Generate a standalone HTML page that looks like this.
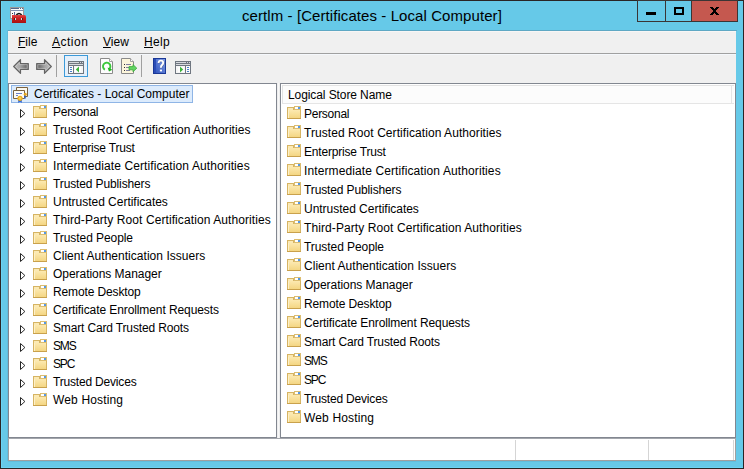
<!DOCTYPE html>
<html><head><meta charset="utf-8"><style>
*{margin:0;padding:0;box-sizing:border-box}
html,body{width:744px;height:469px;overflow:hidden;background:#66c9e8;font-family:"Liberation Sans",sans-serif;font-size:12px;color:#000}
.a{position:absolute}
.tt{line-height:18px;white-space:nowrap;letter-spacing:0.1px}
.lt{line-height:19px;white-space:nowrap;letter-spacing:0.1px}
svg{display:block}
u{text-decoration:underline}
</style></head><body>
<!-- outer dark border -->
<div class="a" style="left:0;top:0;width:744px;height:1px;background:#2a2525"></div>
<div class="a" style="left:0;top:0;width:1px;height:469px;background:#2a2525"></div>
<div class="a" style="left:0;top:468px;width:744px;height:1px;background:#2a2525"></div>
<div class="a" style="left:743px;top:0;width:1px;height:469px;background:#2a2525"></div>
<div class="a" style="left:1px;top:1px;width:1px;height:467px;background:#6cd3f3"></div><div class="a" style="left:1px;top:467px;width:742px;height:1px;background:#6cd3f3"></div><div class="a" style="left:8px;top:461px;width:728px;height:1px;background:#60bddd"></div>
<!-- app icon -->
<div class="a" style="left:10px;top:7px"><svg width="16" height="16" viewBox="0 0 16 16" shape-rendering="crispEdges"><defs><linearGradient id="tb" x1="0" y1="0" x2="0" y2="1"><stop offset="0" stop-color="#e24444"/><stop offset="0.35" stop-color="#cc2424"/><stop offset="1" stop-color="#a81212"/></linearGradient></defs><path d="M0 0H14V12H0Z" fill="#9a9a9a"/><path d="M1 1H13V11H1Z" fill="#fafafa"/><path d="M1 1H9V2H1Z M10 1H11V2H10Z M12 1H13V2H12Z" fill="#55658a"/><path d="M1 3H13V4H1Z" fill="#8090b0"/><path d="M4 5H5V9H4Z" fill="#5a6a9a"/><path d="M2 6H3V7H2Z" fill="#333"/><path d="M4.8 9 Q9 2.4 13.2 9 L11.5 9 Q9 5.6 6.5 9Z" fill="#111" shape-rendering="geometricPrecision"/><path d="M2 8H14.5Q16 8 16 9.5V16H2Z" fill="url(#tb)" shape-rendering="geometricPrecision"/><path d="M5 11H6V13H5Z M11 11H12V13H11Z" fill="#c8dcdc"/><path d="M4 11H5V13H4Z M12 11H13V13H12Z" fill="#6a1010"/></svg></div>
<div class="a" style="left:242px;top:6px;font-size:15px;line-height:20px;white-space:nowrap;letter-spacing:0.08px">certlm - [Certificates - Local Computer]</div>
<!-- caption buttons -->
<div class="a" style="left:637px;top:0;width:101px;height:22px;background:#3a3535"></div>
<div class="a" style="left:638px;top:1px;width:27px;height:20px;background:#66c9e8"></div>
<div class="a" style="left:666px;top:1px;width:25px;height:20px;background:#66c9e8"></div>
<div class="a" style="left:692px;top:1px;width:45px;height:20px;background:#c5584f"></div>
<div class="a" style="left:646px;top:12px;width:10px;height:3px;background:#000"></div>
<div class="a" style="left:674px;top:7px;width:10px;height:8px;border:2px solid #000"></div>
<svg class="a" style="left:710px;top:7px" width="9" height="8" viewBox="0 0 9 8" shape-rendering="crispEdges"><path d="M0 0H3V1H0ZM6 0H9V1H6ZM1 1H4V2H1ZM5 1H8V2H5ZM2 2H7V3H2ZM3 3H6V4H3ZM3 4H6V5H3ZM2 5H7V6H2ZM1 6H4V7H1ZM5 6H8V7H5ZM0 7H3V8H0ZM6 7H9V8H6Z" fill="#000"/></svg>

<!-- client -->
<div class="a" style="left:7px;top:30px;width:730px;height:1px;background:#5ea8c4"></div>
<div class="a" style="left:7px;top:30px;width:1px;height:431px;background:#62bcdc"></div>
<div class="a" style="left:8px;top:31px;width:728px;height:430px;background:#f0f0f0"></div>
<div class="a" style="left:8px;top:31px;width:728px;height:1px;background:#f8f6f5"></div>
<!-- menu -->
<div class="a" style="left:18px;top:35px;line-height:14px;white-space:nowrap"><u>F</u>ile</div>
<div class="a" style="left:52px;top:35px;line-height:14px;white-space:nowrap;letter-spacing:0.5px"><u>A</u>ction</div>
<div class="a" style="left:103px;top:35px;line-height:14px;white-space:nowrap"><u>V</u>iew</div>
<div class="a" style="left:144px;top:35px;line-height:14px;white-space:nowrap;letter-spacing:0.35px"><u>H</u>elp</div>
<div class="a" style="left:8px;top:53px;width:728px;height:1px;background:#a0a0a0"></div>
<div class="a" style="left:8px;top:54px;width:728px;height:1px;background:#f5f8fc"></div>
<!-- toolbar -->
<div class="a" style="left:13px;top:59px"><svg width="16" height="15" viewBox="0 0 16 15"><defs><linearGradient id="ag" x1="0" y1="0" x2="1" y2="0"><stop offset="0" stop-color="#cacaca"/><stop offset="0.45" stop-color="#a4a4a4"/><stop offset="0.85" stop-color="#6e6e6e"/><stop offset="1" stop-color="#8a8a8a"/></linearGradient></defs><path d="M0.7 7.5 L7.5 0.7 V4.5 H15.3 V10.5 H7.5 V14.3 Z" fill="url(#ag)" stroke="#636363" stroke-width="1.2" stroke-linejoin="round"/><path d="M2.4 7.5 L6.4 3.5 V5.6 H14.2 V9.4 H6.4 V11.5 Z" fill="none" stroke="#d8d8d8" stroke-opacity="0.55" stroke-width="0.8"/></svg></div>
<div class="a" style="left:36px;top:59px"><svg width="16" height="15" viewBox="0 0 16 15"><defs><linearGradient id="ag2" x1="0" y1="0" x2="1" y2="0"><stop offset="0" stop-color="#cacaca"/><stop offset="0.45" stop-color="#a4a4a4"/><stop offset="0.85" stop-color="#6e6e6e"/><stop offset="1" stop-color="#8a8a8a"/></linearGradient></defs><path transform="translate(16,0) scale(-1,1)" d="M0.7 7.5 L7.5 0.7 V4.5 H15.3 V10.5 H7.5 V14.3 Z" fill="url(#ag2)" stroke="#636363" stroke-width="1.2" stroke-linejoin="round"/><path transform="translate(16,0) scale(-1,1)" d="M2.4 7.5 L6.4 3.5 V5.6 H14.2 V9.4 H6.4 V11.5 Z" fill="none" stroke="#d8d8d8" stroke-opacity="0.55" stroke-width="0.8"/></svg></div>
<div class="a" style="left:56px;top:55px;width:1px;height:22px;background:#a0a0a0"></div>
<div class="a" style="left:64px;top:55px;width:24px;height:22px;background:#e5f0fb;border:1px solid #3c9ad9"></div>
<div class="a" style="left:68px;top:61px"><svg width="16" height="13" viewBox="0 0 16 13" shape-rendering="crispEdges"><path d="M0 0H16V13H0Z" fill="#6f7680"/><path d="M1 1H11V2H1Z M12 1H13V2H12Z M14 1H15V2H14Z M1 3H15V4H1Z" fill="#d6d9de"/><path d="M1 5H5V12H1Z" fill="#fbfbfb"/><path d="M6 5H15V12H6Z" fill="#f6f6f6"/><path d="M7 6H13V11H7Z" fill="#fdfdfd"/><path d="M2 6H4V7H2Z M2 8H4V9H2Z M2 10H4V11H2Z" fill="#4a7fc8"/><path d="M11 5.6 L11 11.4 L7.8 8.5Z" fill="#3cb53c" shape-rendering="geometricPrecision"/></svg></div>
<div class="a" style="left:100px;top:58px"><svg width="13" height="16" viewBox="0 0 13 16"><path d="M0.5 0.5 H9.5 L12.5 3.5 V15.5 H0.5 Z" fill="#fdfdfd" stroke="#8a8a8a"/><path d="M9.5 0.5 V3.5 H12.5" fill="#fff" stroke="#a0a0a0"/><path d="M4.9 11.6 A3.7 3.7 0 1 1 9.3 11.0" fill="none" stroke="#3cc83c" stroke-width="1.9"/><path d="M7.6 9.6 L12.4 11.8 L9.0 13.6Z" fill="#1fb01f"/></svg></div>
<div class="a" style="left:121px;top:58px"><svg width="17" height="16" viewBox="0 0 17 16"><path d="M0.5 0.5 H9.5 L12.5 3.5 V15.5 H0.5 Z" fill="#fdf6dc" stroke="#8a8a8a"/><path d="M9.5 0.5 V3.5 H12.5" fill="#fff" stroke="#a0a0a0"/><path d="M3 6H4V7H3Z M3 9H4V10H3Z M3 12H4V13H3Z" fill="#333"/><path d="M5 6H10V7H5Z M5 9H9V10H5Z M5 12H9V13H5Z" fill="#8080a0"/><path d="M8 8.6 H12 V6.6 L15.8 10.2 L12 13.8 V11.8 H8Z" fill="#62d462" stroke="#3aa83a" stroke-width="0.8"/></svg></div>
<div class="a" style="left:141px;top:55px;width:1px;height:22px;background:#a0a0a0"></div>
<div class="a" style="left:153px;top:58px"><svg width="13" height="16" viewBox="0 0 13 16"><defs><linearGradient id="hg" x1="0" y1="1" x2="1" y2="0"><stop offset="0" stop-color="#3458c0"/><stop offset="1" stop-color="#7f9ce6"/></linearGradient></defs><path d="M0 0H13V16H0Z" fill="#1a3896"/><path d="M3 1H12V15H3Z" fill="url(#hg)"/><path d="M1 1H3V15H1Z" fill="#2b4cb6"/><path d="M5.6 5.0 Q5.6 2.6 7.9 2.6 Q10.2 2.6 10.2 4.8 Q10.2 6.2 8.9 7.1 Q7.9 7.8 7.9 9.8" stroke="#5a6a9a" stroke-width="1.9" fill="none" transform="translate(0.5,0.4)"/><path d="M5.6 5.0 Q5.6 2.6 7.9 2.6 Q10.2 2.6 10.2 4.8 Q10.2 6.2 8.9 7.1 Q7.9 7.8 7.9 9.8" stroke="#fff" stroke-width="1.9" fill="none"/><path d="M6.9 11.6H9V13.4H6.9Z" fill="#fff"/></svg></div>
<div class="a" style="left:175px;top:61px"><svg width="16" height="13" viewBox="0 0 16 13" shape-rendering="crispEdges"><path d="M0 0H16V13H0Z" fill="#6f7680"/><path d="M1 1H11V2H1Z M12 1H13V2H12Z M14 1H15V2H14Z M1 3H15V4H1Z" fill="#d6d9de"/><path d="M11 5H15V12H11Z" fill="#fbfbfb"/><path d="M1 5H10V12H1Z" fill="#f6f6f6"/><path d="M3 6H9V11H3Z" fill="#fdfdfd"/><path d="M12 6H14V7H12Z M12 8H14V9H12Z M12 10H14V11H12Z" fill="#4a7fc8"/><path d="M5 5.6 L5 11.4 L8.2 8.5Z" fill="#3cb53c" shape-rendering="geometricPrecision"/></svg></div>

<!-- tree pane -->
<div class="a" style="left:8px;top:83px;width:269px;height:355px;background:#fff;border:1px solid #828790"></div>
<div class="a" style="left:11px;top:85px;width:182px;height:18px;background:#dcebfc;border:1px solid #8fb5e6"></div>
<div class="a" style="left:13px;top:87px"><svg width="15" height="16" viewBox="0 0 15 16"><path d="M3.5 0.5H14.5V9.5H3.5Z" fill="#fbf8ef" stroke="#7a6240"/><path d="M0.5 3.5H11.5V11.5H0.5Z" fill="#fdfbf4" stroke="#7a6240"/><path d="M3 6H9V7H3Z M3 8H4.5V9H3Z" fill="#6a7fc8" shape-rendering="crispEdges"/><path d="M11.2 7.5 L12.5 7.5 L13 12 L12 11 L11.5 12Z" fill="#2a60d0"/><circle cx="12.3" cy="7.3" r="1.5" fill="#e8a820"/><path d="M5 12.5 L5.5 16 L7 14.5 L8.5 16 L9 12.5Z" fill="#1f5ad8"/><circle cx="7" cy="11.3" r="2.6" fill="#e9a91a"/><circle cx="7" cy="11.3" r="1.3" fill="#f6d060"/></svg></div>
<div class="a tt" style="left:34px;top:85px;letter-spacing:0px">Certificates - Local Computer</div>
<div class="a tri" style="left:20px;top:109px"><svg width="6" height="9" viewBox="0 0 6 9"><path d="M0.5 0.5 L4.9 4.5 L0.5 8.5 Z" fill="#fff" stroke="#262626" stroke-width="1"/></svg></div><div class="a" style="left:33px;top:105px"><svg width="14" height="13" viewBox="0 0 14 13" shape-rendering="crispEdges"><defs><linearGradient id="fg" x1="0" y1="0" x2="0" y2="1"><stop offset="0" stop-color="#fce9b0"/><stop offset="1" stop-color="#f4d683"/></linearGradient></defs><path d="M0 1H7V4H14V13H0Z" fill="#d6b463"/><path d="M7 0H14V4H7Z" fill="#dcbd70"/><path d="M0 12H14V13H0Z" fill="#c9a14c"/><path d="M8 1H11V3H8Z" fill="#ffffff"/><path d="M11 1H13V3H11Z" fill="#5598e4"/><path d="M1 2H6V4H1Z" fill="#fbe9b4"/><path d="M1 4H13V12H1Z" fill="url(#fg)"/><path d="M1 4H2V12H1Z" fill="#fdf0c8"/></svg></div><div class="a tt" style="left:53px;top:103px;letter-spacing:-0.271px">Personal</div><div class="a tri" style="left:20px;top:127px"><svg width="6" height="9" viewBox="0 0 6 9"><path d="M0.5 0.5 L4.9 4.5 L0.5 8.5 Z" fill="#fff" stroke="#262626" stroke-width="1"/></svg></div><div class="a" style="left:33px;top:123px"><svg width="14" height="13" viewBox="0 0 14 13" shape-rendering="crispEdges"><defs><linearGradient id="fg" x1="0" y1="0" x2="0" y2="1"><stop offset="0" stop-color="#fce9b0"/><stop offset="1" stop-color="#f4d683"/></linearGradient></defs><path d="M0 1H7V4H14V13H0Z" fill="#d6b463"/><path d="M7 0H14V4H7Z" fill="#dcbd70"/><path d="M0 12H14V13H0Z" fill="#c9a14c"/><path d="M8 1H11V3H8Z" fill="#ffffff"/><path d="M11 1H13V3H11Z" fill="#5598e4"/><path d="M1 2H6V4H1Z" fill="#fbe9b4"/><path d="M1 4H13V12H1Z" fill="url(#fg)"/><path d="M1 4H2V12H1Z" fill="#fdf0c8"/></svg></div><div class="a tt" style="left:53px;top:121px;letter-spacing:0.068px">Trusted Root Certification Authorities</div><div class="a tri" style="left:20px;top:145px"><svg width="6" height="9" viewBox="0 0 6 9"><path d="M0.5 0.5 L4.9 4.5 L0.5 8.5 Z" fill="#fff" stroke="#262626" stroke-width="1"/></svg></div><div class="a" style="left:33px;top:141px"><svg width="14" height="13" viewBox="0 0 14 13" shape-rendering="crispEdges"><defs><linearGradient id="fg" x1="0" y1="0" x2="0" y2="1"><stop offset="0" stop-color="#fce9b0"/><stop offset="1" stop-color="#f4d683"/></linearGradient></defs><path d="M0 1H7V4H14V13H0Z" fill="#d6b463"/><path d="M7 0H14V4H7Z" fill="#dcbd70"/><path d="M0 12H14V13H0Z" fill="#c9a14c"/><path d="M8 1H11V3H8Z" fill="#ffffff"/><path d="M11 1H13V3H11Z" fill="#5598e4"/><path d="M1 2H6V4H1Z" fill="#fbe9b4"/><path d="M1 4H13V12H1Z" fill="url(#fg)"/><path d="M1 4H2V12H1Z" fill="#fdf0c8"/></svg></div><div class="a tt" style="left:53px;top:139px;letter-spacing:-0.193px">Enterprise Trust</div><div class="a tri" style="left:20px;top:163px"><svg width="6" height="9" viewBox="0 0 6 9"><path d="M0.5 0.5 L4.9 4.5 L0.5 8.5 Z" fill="#fff" stroke="#262626" stroke-width="1"/></svg></div><div class="a" style="left:33px;top:159px"><svg width="14" height="13" viewBox="0 0 14 13" shape-rendering="crispEdges"><defs><linearGradient id="fg" x1="0" y1="0" x2="0" y2="1"><stop offset="0" stop-color="#fce9b0"/><stop offset="1" stop-color="#f4d683"/></linearGradient></defs><path d="M0 1H7V4H14V13H0Z" fill="#d6b463"/><path d="M7 0H14V4H7Z" fill="#dcbd70"/><path d="M0 12H14V13H0Z" fill="#c9a14c"/><path d="M8 1H11V3H8Z" fill="#ffffff"/><path d="M11 1H13V3H11Z" fill="#5598e4"/><path d="M1 2H6V4H1Z" fill="#fbe9b4"/><path d="M1 4H13V12H1Z" fill="url(#fg)"/><path d="M1 4H2V12H1Z" fill="#fdf0c8"/></svg></div><div class="a tt" style="left:53px;top:157px;letter-spacing:0.105px">Intermediate Certification Authorities</div><div class="a tri" style="left:20px;top:181px"><svg width="6" height="9" viewBox="0 0 6 9"><path d="M0.5 0.5 L4.9 4.5 L0.5 8.5 Z" fill="#fff" stroke="#262626" stroke-width="1"/></svg></div><div class="a" style="left:33px;top:177px"><svg width="14" height="13" viewBox="0 0 14 13" shape-rendering="crispEdges"><defs><linearGradient id="fg" x1="0" y1="0" x2="0" y2="1"><stop offset="0" stop-color="#fce9b0"/><stop offset="1" stop-color="#f4d683"/></linearGradient></defs><path d="M0 1H7V4H14V13H0Z" fill="#d6b463"/><path d="M7 0H14V4H7Z" fill="#dcbd70"/><path d="M0 12H14V13H0Z" fill="#c9a14c"/><path d="M8 1H11V3H8Z" fill="#ffffff"/><path d="M11 1H13V3H11Z" fill="#5598e4"/><path d="M1 2H6V4H1Z" fill="#fbe9b4"/><path d="M1 4H13V12H1Z" fill="url(#fg)"/><path d="M1 4H2V12H1Z" fill="#fdf0c8"/></svg></div><div class="a tt" style="left:53px;top:175px;letter-spacing:-0.124px">Trusted Publishers</div><div class="a tri" style="left:20px;top:199px"><svg width="6" height="9" viewBox="0 0 6 9"><path d="M0.5 0.5 L4.9 4.5 L0.5 8.5 Z" fill="#fff" stroke="#262626" stroke-width="1"/></svg></div><div class="a" style="left:33px;top:195px"><svg width="14" height="13" viewBox="0 0 14 13" shape-rendering="crispEdges"><defs><linearGradient id="fg" x1="0" y1="0" x2="0" y2="1"><stop offset="0" stop-color="#fce9b0"/><stop offset="1" stop-color="#f4d683"/></linearGradient></defs><path d="M0 1H7V4H14V13H0Z" fill="#d6b463"/><path d="M7 0H14V4H7Z" fill="#dcbd70"/><path d="M0 12H14V13H0Z" fill="#c9a14c"/><path d="M8 1H11V3H8Z" fill="#ffffff"/><path d="M11 1H13V3H11Z" fill="#5598e4"/><path d="M1 2H6V4H1Z" fill="#fbe9b4"/><path d="M1 4H13V12H1Z" fill="url(#fg)"/><path d="M1 4H2V12H1Z" fill="#fdf0c8"/></svg></div><div class="a tt" style="left:53px;top:193px;letter-spacing:-0.024px">Untrusted Certificates</div><div class="a tri" style="left:20px;top:217px"><svg width="6" height="9" viewBox="0 0 6 9"><path d="M0.5 0.5 L4.9 4.5 L0.5 8.5 Z" fill="#fff" stroke="#262626" stroke-width="1"/></svg></div><div class="a" style="left:33px;top:213px"><svg width="14" height="13" viewBox="0 0 14 13" shape-rendering="crispEdges"><defs><linearGradient id="fg" x1="0" y1="0" x2="0" y2="1"><stop offset="0" stop-color="#fce9b0"/><stop offset="1" stop-color="#f4d683"/></linearGradient></defs><path d="M0 1H7V4H14V13H0Z" fill="#d6b463"/><path d="M7 0H14V4H7Z" fill="#dcbd70"/><path d="M0 12H14V13H0Z" fill="#c9a14c"/><path d="M8 1H11V3H8Z" fill="#ffffff"/><path d="M11 1H13V3H11Z" fill="#5598e4"/><path d="M1 2H6V4H1Z" fill="#fbe9b4"/><path d="M1 4H13V12H1Z" fill="url(#fg)"/><path d="M1 4H2V12H1Z" fill="#fdf0c8"/></svg></div><div class="a tt" style="left:53px;top:211px;letter-spacing:0.090px">Third-Party Root Certification Authorities</div><div class="a tri" style="left:20px;top:235px"><svg width="6" height="9" viewBox="0 0 6 9"><path d="M0.5 0.5 L4.9 4.5 L0.5 8.5 Z" fill="#fff" stroke="#262626" stroke-width="1"/></svg></div><div class="a" style="left:33px;top:231px"><svg width="14" height="13" viewBox="0 0 14 13" shape-rendering="crispEdges"><defs><linearGradient id="fg" x1="0" y1="0" x2="0" y2="1"><stop offset="0" stop-color="#fce9b0"/><stop offset="1" stop-color="#f4d683"/></linearGradient></defs><path d="M0 1H7V4H14V13H0Z" fill="#d6b463"/><path d="M7 0H14V4H7Z" fill="#dcbd70"/><path d="M0 12H14V13H0Z" fill="#c9a14c"/><path d="M8 1H11V3H8Z" fill="#ffffff"/><path d="M11 1H13V3H11Z" fill="#5598e4"/><path d="M1 2H6V4H1Z" fill="#fbe9b4"/><path d="M1 4H13V12H1Z" fill="url(#fg)"/><path d="M1 4H2V12H1Z" fill="#fdf0c8"/></svg></div><div class="a tt" style="left:53px;top:229px;letter-spacing:-0.069px">Trusted People</div><div class="a tri" style="left:20px;top:253px"><svg width="6" height="9" viewBox="0 0 6 9"><path d="M0.5 0.5 L4.9 4.5 L0.5 8.5 Z" fill="#fff" stroke="#262626" stroke-width="1"/></svg></div><div class="a" style="left:33px;top:249px"><svg width="14" height="13" viewBox="0 0 14 13" shape-rendering="crispEdges"><defs><linearGradient id="fg" x1="0" y1="0" x2="0" y2="1"><stop offset="0" stop-color="#fce9b0"/><stop offset="1" stop-color="#f4d683"/></linearGradient></defs><path d="M0 1H7V4H14V13H0Z" fill="#d6b463"/><path d="M7 0H14V4H7Z" fill="#dcbd70"/><path d="M0 12H14V13H0Z" fill="#c9a14c"/><path d="M8 1H11V3H8Z" fill="#ffffff"/><path d="M11 1H13V3H11Z" fill="#5598e4"/><path d="M1 2H6V4H1Z" fill="#fbe9b4"/><path d="M1 4H13V12H1Z" fill="url(#fg)"/><path d="M1 4H2V12H1Z" fill="#fdf0c8"/></svg></div><div class="a tt" style="left:53px;top:247px;letter-spacing:0.029px">Client Authentication Issuers</div><div class="a tri" style="left:20px;top:271px"><svg width="6" height="9" viewBox="0 0 6 9"><path d="M0.5 0.5 L4.9 4.5 L0.5 8.5 Z" fill="#fff" stroke="#262626" stroke-width="1"/></svg></div><div class="a" style="left:33px;top:267px"><svg width="14" height="13" viewBox="0 0 14 13" shape-rendering="crispEdges"><defs><linearGradient id="fg" x1="0" y1="0" x2="0" y2="1"><stop offset="0" stop-color="#fce9b0"/><stop offset="1" stop-color="#f4d683"/></linearGradient></defs><path d="M0 1H7V4H14V13H0Z" fill="#d6b463"/><path d="M7 0H14V4H7Z" fill="#dcbd70"/><path d="M0 12H14V13H0Z" fill="#c9a14c"/><path d="M8 1H11V3H8Z" fill="#ffffff"/><path d="M11 1H13V3H11Z" fill="#5598e4"/><path d="M1 2H6V4H1Z" fill="#fbe9b4"/><path d="M1 4H13V12H1Z" fill="url(#fg)"/><path d="M1 4H2V12H1Z" fill="#fdf0c8"/></svg></div><div class="a tt" style="left:53px;top:265px;letter-spacing:-0.041px">Operations Manager</div><div class="a tri" style="left:20px;top:289px"><svg width="6" height="9" viewBox="0 0 6 9"><path d="M0.5 0.5 L4.9 4.5 L0.5 8.5 Z" fill="#fff" stroke="#262626" stroke-width="1"/></svg></div><div class="a" style="left:33px;top:285px"><svg width="14" height="13" viewBox="0 0 14 13" shape-rendering="crispEdges"><defs><linearGradient id="fg" x1="0" y1="0" x2="0" y2="1"><stop offset="0" stop-color="#fce9b0"/><stop offset="1" stop-color="#f4d683"/></linearGradient></defs><path d="M0 1H7V4H14V13H0Z" fill="#d6b463"/><path d="M7 0H14V4H7Z" fill="#dcbd70"/><path d="M0 12H14V13H0Z" fill="#c9a14c"/><path d="M8 1H11V3H8Z" fill="#ffffff"/><path d="M11 1H13V3H11Z" fill="#5598e4"/><path d="M1 2H6V4H1Z" fill="#fbe9b4"/><path d="M1 4H13V12H1Z" fill="url(#fg)"/><path d="M1 4H2V12H1Z" fill="#fdf0c8"/></svg></div><div class="a tt" style="left:53px;top:283px;letter-spacing:-0.131px">Remote Desktop</div><div class="a tri" style="left:20px;top:307px"><svg width="6" height="9" viewBox="0 0 6 9"><path d="M0.5 0.5 L4.9 4.5 L0.5 8.5 Z" fill="#fff" stroke="#262626" stroke-width="1"/></svg></div><div class="a" style="left:33px;top:303px"><svg width="14" height="13" viewBox="0 0 14 13" shape-rendering="crispEdges"><defs><linearGradient id="fg" x1="0" y1="0" x2="0" y2="1"><stop offset="0" stop-color="#fce9b0"/><stop offset="1" stop-color="#f4d683"/></linearGradient></defs><path d="M0 1H7V4H14V13H0Z" fill="#d6b463"/><path d="M7 0H14V4H7Z" fill="#dcbd70"/><path d="M0 12H14V13H0Z" fill="#c9a14c"/><path d="M8 1H11V3H8Z" fill="#ffffff"/><path d="M11 1H13V3H11Z" fill="#5598e4"/><path d="M1 2H6V4H1Z" fill="#fbe9b4"/><path d="M1 4H13V12H1Z" fill="url(#fg)"/><path d="M1 4H2V12H1Z" fill="#fdf0c8"/></svg></div><div class="a tt" style="left:53px;top:301px;letter-spacing:-0.093px">Certificate Enrollment Requests</div><div class="a tri" style="left:20px;top:325px"><svg width="6" height="9" viewBox="0 0 6 9"><path d="M0.5 0.5 L4.9 4.5 L0.5 8.5 Z" fill="#fff" stroke="#262626" stroke-width="1"/></svg></div><div class="a" style="left:33px;top:321px"><svg width="14" height="13" viewBox="0 0 14 13" shape-rendering="crispEdges"><defs><linearGradient id="fg" x1="0" y1="0" x2="0" y2="1"><stop offset="0" stop-color="#fce9b0"/><stop offset="1" stop-color="#f4d683"/></linearGradient></defs><path d="M0 1H7V4H14V13H0Z" fill="#d6b463"/><path d="M7 0H14V4H7Z" fill="#dcbd70"/><path d="M0 12H14V13H0Z" fill="#c9a14c"/><path d="M8 1H11V3H8Z" fill="#ffffff"/><path d="M11 1H13V3H11Z" fill="#5598e4"/><path d="M1 2H6V4H1Z" fill="#fbe9b4"/><path d="M1 4H13V12H1Z" fill="url(#fg)"/><path d="M1 4H2V12H1Z" fill="#fdf0c8"/></svg></div><div class="a tt" style="left:53px;top:319px;letter-spacing:-0.152px">Smart Card Trusted Roots</div><div class="a tri" style="left:20px;top:343px"><svg width="6" height="9" viewBox="0 0 6 9"><path d="M0.5 0.5 L4.9 4.5 L0.5 8.5 Z" fill="#fff" stroke="#262626" stroke-width="1"/></svg></div><div class="a" style="left:33px;top:339px"><svg width="14" height="13" viewBox="0 0 14 13" shape-rendering="crispEdges"><defs><linearGradient id="fg" x1="0" y1="0" x2="0" y2="1"><stop offset="0" stop-color="#fce9b0"/><stop offset="1" stop-color="#f4d683"/></linearGradient></defs><path d="M0 1H7V4H14V13H0Z" fill="#d6b463"/><path d="M7 0H14V4H7Z" fill="#dcbd70"/><path d="M0 12H14V13H0Z" fill="#c9a14c"/><path d="M8 1H11V3H8Z" fill="#ffffff"/><path d="M11 1H13V3H11Z" fill="#5598e4"/><path d="M1 2H6V4H1Z" fill="#fbe9b4"/><path d="M1 4H13V12H1Z" fill="url(#fg)"/><path d="M1 4H2V12H1Z" fill="#fdf0c8"/></svg></div><div class="a tt" style="left:53px;top:337px;letter-spacing:-1.150px">SMS</div><div class="a tri" style="left:20px;top:361px"><svg width="6" height="9" viewBox="0 0 6 9"><path d="M0.5 0.5 L4.9 4.5 L0.5 8.5 Z" fill="#fff" stroke="#262626" stroke-width="1"/></svg></div><div class="a" style="left:33px;top:357px"><svg width="14" height="13" viewBox="0 0 14 13" shape-rendering="crispEdges"><defs><linearGradient id="fg" x1="0" y1="0" x2="0" y2="1"><stop offset="0" stop-color="#fce9b0"/><stop offset="1" stop-color="#f4d683"/></linearGradient></defs><path d="M0 1H7V4H14V13H0Z" fill="#d6b463"/><path d="M7 0H14V4H7Z" fill="#dcbd70"/><path d="M0 12H14V13H0Z" fill="#c9a14c"/><path d="M8 1H11V3H8Z" fill="#ffffff"/><path d="M11 1H13V3H11Z" fill="#5598e4"/><path d="M1 2H6V4H1Z" fill="#fbe9b4"/><path d="M1 4H13V12H1Z" fill="url(#fg)"/><path d="M1 4H2V12H1Z" fill="#fdf0c8"/></svg></div><div class="a tt" style="left:53px;top:355px;letter-spacing:-1.150px">SPC</div><div class="a tri" style="left:20px;top:379px"><svg width="6" height="9" viewBox="0 0 6 9"><path d="M0.5 0.5 L4.9 4.5 L0.5 8.5 Z" fill="#fff" stroke="#262626" stroke-width="1"/></svg></div><div class="a" style="left:33px;top:375px"><svg width="14" height="13" viewBox="0 0 14 13" shape-rendering="crispEdges"><defs><linearGradient id="fg" x1="0" y1="0" x2="0" y2="1"><stop offset="0" stop-color="#fce9b0"/><stop offset="1" stop-color="#f4d683"/></linearGradient></defs><path d="M0 1H7V4H14V13H0Z" fill="#d6b463"/><path d="M7 0H14V4H7Z" fill="#dcbd70"/><path d="M0 12H14V13H0Z" fill="#c9a14c"/><path d="M8 1H11V3H8Z" fill="#ffffff"/><path d="M11 1H13V3H11Z" fill="#5598e4"/><path d="M1 2H6V4H1Z" fill="#fbe9b4"/><path d="M1 4H13V12H1Z" fill="url(#fg)"/><path d="M1 4H2V12H1Z" fill="#fdf0c8"/></svg></div><div class="a tt" style="left:53px;top:373px;letter-spacing:-0.186px">Trusted Devices</div><div class="a tri" style="left:20px;top:397px"><svg width="6" height="9" viewBox="0 0 6 9"><path d="M0.5 0.5 L4.9 4.5 L0.5 8.5 Z" fill="#fff" stroke="#262626" stroke-width="1"/></svg></div><div class="a" style="left:33px;top:393px"><svg width="14" height="13" viewBox="0 0 14 13" shape-rendering="crispEdges"><defs><linearGradient id="fg" x1="0" y1="0" x2="0" y2="1"><stop offset="0" stop-color="#fce9b0"/><stop offset="1" stop-color="#f4d683"/></linearGradient></defs><path d="M0 1H7V4H14V13H0Z" fill="#d6b463"/><path d="M7 0H14V4H7Z" fill="#dcbd70"/><path d="M0 12H14V13H0Z" fill="#c9a14c"/><path d="M8 1H11V3H8Z" fill="#ffffff"/><path d="M11 1H13V3H11Z" fill="#5598e4"/><path d="M1 2H6V4H1Z" fill="#fbe9b4"/><path d="M1 4H13V12H1Z" fill="url(#fg)"/><path d="M1 4H2V12H1Z" fill="#fdf0c8"/></svg></div><div class="a tt" style="left:53px;top:391px;letter-spacing:0.150px">Web Hosting</div>
<!-- splitter -->
<div class="a" style="left:277px;top:83px;width:3px;height:355px;background:#eeeeee"></div><div class="a" style="left:278px;top:83px;width:1px;height:355px;background:#f8f8f8"></div>
<!-- list pane -->
<div class="a" style="left:280px;top:83px;width:456px;height:355px;background:#fff;border:1px solid #828790"></div>
<div class="a" style="left:282px;top:85px;width:452px;height:19px;background:#fcfcfc;border-left:1px solid #e3e3e3;border-top:1px solid #e3e3e3;border-bottom:1px solid #e5e5e5"></div>
<div class="a" style="left:731px;top:85px;width:1px;height:18px;background:#e5e5e5"></div>
<div class="a tt" style="left:288px;top:86px;letter-spacing:-0.09px">Logical Store Name</div>
<div class="a" style="left:287px;top:106px"><svg width="14" height="13" viewBox="0 0 14 13" shape-rendering="crispEdges"><defs><linearGradient id="fg2" x1="0" y1="0" x2="0" y2="1"><stop offset="0" stop-color="#fce9b0"/><stop offset="1" stop-color="#f4d683"/></linearGradient></defs><path d="M0 1H7V4H14V13H0Z" fill="#d6b463"/><path d="M7 0H14V4H7Z" fill="#dcbd70"/><path d="M0 12H14V13H0Z" fill="#c9a14c"/><path d="M8 1H11V3H8Z" fill="#ffffff"/><path d="M11 1H13V3H11Z" fill="#5598e4"/><path d="M1 2H6V4H1Z" fill="#fbe9b4"/><path d="M1 4H13V12H1Z" fill="url(#fg2)"/><path d="M1 4H2V12H1Z" fill="#fdf0c8"/></svg></div><div class="a lt" style="left:304px;top:105px;letter-spacing:-0.271px">Personal</div><div class="a" style="left:287px;top:125px"><svg width="14" height="13" viewBox="0 0 14 13" shape-rendering="crispEdges"><defs><linearGradient id="fg2" x1="0" y1="0" x2="0" y2="1"><stop offset="0" stop-color="#fce9b0"/><stop offset="1" stop-color="#f4d683"/></linearGradient></defs><path d="M0 1H7V4H14V13H0Z" fill="#d6b463"/><path d="M7 0H14V4H7Z" fill="#dcbd70"/><path d="M0 12H14V13H0Z" fill="#c9a14c"/><path d="M8 1H11V3H8Z" fill="#ffffff"/><path d="M11 1H13V3H11Z" fill="#5598e4"/><path d="M1 2H6V4H1Z" fill="#fbe9b4"/><path d="M1 4H13V12H1Z" fill="url(#fg2)"/><path d="M1 4H2V12H1Z" fill="#fdf0c8"/></svg></div><div class="a lt" style="left:304px;top:124px;letter-spacing:0.068px">Trusted Root Certification Authorities</div><div class="a" style="left:287px;top:144px"><svg width="14" height="13" viewBox="0 0 14 13" shape-rendering="crispEdges"><defs><linearGradient id="fg2" x1="0" y1="0" x2="0" y2="1"><stop offset="0" stop-color="#fce9b0"/><stop offset="1" stop-color="#f4d683"/></linearGradient></defs><path d="M0 1H7V4H14V13H0Z" fill="#d6b463"/><path d="M7 0H14V4H7Z" fill="#dcbd70"/><path d="M0 12H14V13H0Z" fill="#c9a14c"/><path d="M8 1H11V3H8Z" fill="#ffffff"/><path d="M11 1H13V3H11Z" fill="#5598e4"/><path d="M1 2H6V4H1Z" fill="#fbe9b4"/><path d="M1 4H13V12H1Z" fill="url(#fg2)"/><path d="M1 4H2V12H1Z" fill="#fdf0c8"/></svg></div><div class="a lt" style="left:304px;top:143px;letter-spacing:-0.193px">Enterprise Trust</div><div class="a" style="left:287px;top:163px"><svg width="14" height="13" viewBox="0 0 14 13" shape-rendering="crispEdges"><defs><linearGradient id="fg2" x1="0" y1="0" x2="0" y2="1"><stop offset="0" stop-color="#fce9b0"/><stop offset="1" stop-color="#f4d683"/></linearGradient></defs><path d="M0 1H7V4H14V13H0Z" fill="#d6b463"/><path d="M7 0H14V4H7Z" fill="#dcbd70"/><path d="M0 12H14V13H0Z" fill="#c9a14c"/><path d="M8 1H11V3H8Z" fill="#ffffff"/><path d="M11 1H13V3H11Z" fill="#5598e4"/><path d="M1 2H6V4H1Z" fill="#fbe9b4"/><path d="M1 4H13V12H1Z" fill="url(#fg2)"/><path d="M1 4H2V12H1Z" fill="#fdf0c8"/></svg></div><div class="a lt" style="left:304px;top:162px;letter-spacing:0.105px">Intermediate Certification Authorities</div><div class="a" style="left:287px;top:182px"><svg width="14" height="13" viewBox="0 0 14 13" shape-rendering="crispEdges"><defs><linearGradient id="fg2" x1="0" y1="0" x2="0" y2="1"><stop offset="0" stop-color="#fce9b0"/><stop offset="1" stop-color="#f4d683"/></linearGradient></defs><path d="M0 1H7V4H14V13H0Z" fill="#d6b463"/><path d="M7 0H14V4H7Z" fill="#dcbd70"/><path d="M0 12H14V13H0Z" fill="#c9a14c"/><path d="M8 1H11V3H8Z" fill="#ffffff"/><path d="M11 1H13V3H11Z" fill="#5598e4"/><path d="M1 2H6V4H1Z" fill="#fbe9b4"/><path d="M1 4H13V12H1Z" fill="url(#fg2)"/><path d="M1 4H2V12H1Z" fill="#fdf0c8"/></svg></div><div class="a lt" style="left:304px;top:181px;letter-spacing:-0.124px">Trusted Publishers</div><div class="a" style="left:287px;top:201px"><svg width="14" height="13" viewBox="0 0 14 13" shape-rendering="crispEdges"><defs><linearGradient id="fg2" x1="0" y1="0" x2="0" y2="1"><stop offset="0" stop-color="#fce9b0"/><stop offset="1" stop-color="#f4d683"/></linearGradient></defs><path d="M0 1H7V4H14V13H0Z" fill="#d6b463"/><path d="M7 0H14V4H7Z" fill="#dcbd70"/><path d="M0 12H14V13H0Z" fill="#c9a14c"/><path d="M8 1H11V3H8Z" fill="#ffffff"/><path d="M11 1H13V3H11Z" fill="#5598e4"/><path d="M1 2H6V4H1Z" fill="#fbe9b4"/><path d="M1 4H13V12H1Z" fill="url(#fg2)"/><path d="M1 4H2V12H1Z" fill="#fdf0c8"/></svg></div><div class="a lt" style="left:304px;top:200px;letter-spacing:-0.024px">Untrusted Certificates</div><div class="a" style="left:287px;top:220px"><svg width="14" height="13" viewBox="0 0 14 13" shape-rendering="crispEdges"><defs><linearGradient id="fg2" x1="0" y1="0" x2="0" y2="1"><stop offset="0" stop-color="#fce9b0"/><stop offset="1" stop-color="#f4d683"/></linearGradient></defs><path d="M0 1H7V4H14V13H0Z" fill="#d6b463"/><path d="M7 0H14V4H7Z" fill="#dcbd70"/><path d="M0 12H14V13H0Z" fill="#c9a14c"/><path d="M8 1H11V3H8Z" fill="#ffffff"/><path d="M11 1H13V3H11Z" fill="#5598e4"/><path d="M1 2H6V4H1Z" fill="#fbe9b4"/><path d="M1 4H13V12H1Z" fill="url(#fg2)"/><path d="M1 4H2V12H1Z" fill="#fdf0c8"/></svg></div><div class="a lt" style="left:304px;top:219px;letter-spacing:0.090px">Third-Party Root Certification Authorities</div><div class="a" style="left:287px;top:239px"><svg width="14" height="13" viewBox="0 0 14 13" shape-rendering="crispEdges"><defs><linearGradient id="fg2" x1="0" y1="0" x2="0" y2="1"><stop offset="0" stop-color="#fce9b0"/><stop offset="1" stop-color="#f4d683"/></linearGradient></defs><path d="M0 1H7V4H14V13H0Z" fill="#d6b463"/><path d="M7 0H14V4H7Z" fill="#dcbd70"/><path d="M0 12H14V13H0Z" fill="#c9a14c"/><path d="M8 1H11V3H8Z" fill="#ffffff"/><path d="M11 1H13V3H11Z" fill="#5598e4"/><path d="M1 2H6V4H1Z" fill="#fbe9b4"/><path d="M1 4H13V12H1Z" fill="url(#fg2)"/><path d="M1 4H2V12H1Z" fill="#fdf0c8"/></svg></div><div class="a lt" style="left:304px;top:238px;letter-spacing:-0.069px">Trusted People</div><div class="a" style="left:287px;top:258px"><svg width="14" height="13" viewBox="0 0 14 13" shape-rendering="crispEdges"><defs><linearGradient id="fg2" x1="0" y1="0" x2="0" y2="1"><stop offset="0" stop-color="#fce9b0"/><stop offset="1" stop-color="#f4d683"/></linearGradient></defs><path d="M0 1H7V4H14V13H0Z" fill="#d6b463"/><path d="M7 0H14V4H7Z" fill="#dcbd70"/><path d="M0 12H14V13H0Z" fill="#c9a14c"/><path d="M8 1H11V3H8Z" fill="#ffffff"/><path d="M11 1H13V3H11Z" fill="#5598e4"/><path d="M1 2H6V4H1Z" fill="#fbe9b4"/><path d="M1 4H13V12H1Z" fill="url(#fg2)"/><path d="M1 4H2V12H1Z" fill="#fdf0c8"/></svg></div><div class="a lt" style="left:304px;top:257px;letter-spacing:0.029px">Client Authentication Issuers</div><div class="a" style="left:287px;top:277px"><svg width="14" height="13" viewBox="0 0 14 13" shape-rendering="crispEdges"><defs><linearGradient id="fg2" x1="0" y1="0" x2="0" y2="1"><stop offset="0" stop-color="#fce9b0"/><stop offset="1" stop-color="#f4d683"/></linearGradient></defs><path d="M0 1H7V4H14V13H0Z" fill="#d6b463"/><path d="M7 0H14V4H7Z" fill="#dcbd70"/><path d="M0 12H14V13H0Z" fill="#c9a14c"/><path d="M8 1H11V3H8Z" fill="#ffffff"/><path d="M11 1H13V3H11Z" fill="#5598e4"/><path d="M1 2H6V4H1Z" fill="#fbe9b4"/><path d="M1 4H13V12H1Z" fill="url(#fg2)"/><path d="M1 4H2V12H1Z" fill="#fdf0c8"/></svg></div><div class="a lt" style="left:304px;top:276px;letter-spacing:-0.041px">Operations Manager</div><div class="a" style="left:287px;top:296px"><svg width="14" height="13" viewBox="0 0 14 13" shape-rendering="crispEdges"><defs><linearGradient id="fg2" x1="0" y1="0" x2="0" y2="1"><stop offset="0" stop-color="#fce9b0"/><stop offset="1" stop-color="#f4d683"/></linearGradient></defs><path d="M0 1H7V4H14V13H0Z" fill="#d6b463"/><path d="M7 0H14V4H7Z" fill="#dcbd70"/><path d="M0 12H14V13H0Z" fill="#c9a14c"/><path d="M8 1H11V3H8Z" fill="#ffffff"/><path d="M11 1H13V3H11Z" fill="#5598e4"/><path d="M1 2H6V4H1Z" fill="#fbe9b4"/><path d="M1 4H13V12H1Z" fill="url(#fg2)"/><path d="M1 4H2V12H1Z" fill="#fdf0c8"/></svg></div><div class="a lt" style="left:304px;top:295px;letter-spacing:-0.131px">Remote Desktop</div><div class="a" style="left:287px;top:315px"><svg width="14" height="13" viewBox="0 0 14 13" shape-rendering="crispEdges"><defs><linearGradient id="fg2" x1="0" y1="0" x2="0" y2="1"><stop offset="0" stop-color="#fce9b0"/><stop offset="1" stop-color="#f4d683"/></linearGradient></defs><path d="M0 1H7V4H14V13H0Z" fill="#d6b463"/><path d="M7 0H14V4H7Z" fill="#dcbd70"/><path d="M0 12H14V13H0Z" fill="#c9a14c"/><path d="M8 1H11V3H8Z" fill="#ffffff"/><path d="M11 1H13V3H11Z" fill="#5598e4"/><path d="M1 2H6V4H1Z" fill="#fbe9b4"/><path d="M1 4H13V12H1Z" fill="url(#fg2)"/><path d="M1 4H2V12H1Z" fill="#fdf0c8"/></svg></div><div class="a lt" style="left:304px;top:314px;letter-spacing:-0.093px">Certificate Enrollment Requests</div><div class="a" style="left:287px;top:334px"><svg width="14" height="13" viewBox="0 0 14 13" shape-rendering="crispEdges"><defs><linearGradient id="fg2" x1="0" y1="0" x2="0" y2="1"><stop offset="0" stop-color="#fce9b0"/><stop offset="1" stop-color="#f4d683"/></linearGradient></defs><path d="M0 1H7V4H14V13H0Z" fill="#d6b463"/><path d="M7 0H14V4H7Z" fill="#dcbd70"/><path d="M0 12H14V13H0Z" fill="#c9a14c"/><path d="M8 1H11V3H8Z" fill="#ffffff"/><path d="M11 1H13V3H11Z" fill="#5598e4"/><path d="M1 2H6V4H1Z" fill="#fbe9b4"/><path d="M1 4H13V12H1Z" fill="url(#fg2)"/><path d="M1 4H2V12H1Z" fill="#fdf0c8"/></svg></div><div class="a lt" style="left:304px;top:333px;letter-spacing:-0.152px">Smart Card Trusted Roots</div><div class="a" style="left:287px;top:353px"><svg width="14" height="13" viewBox="0 0 14 13" shape-rendering="crispEdges"><defs><linearGradient id="fg2" x1="0" y1="0" x2="0" y2="1"><stop offset="0" stop-color="#fce9b0"/><stop offset="1" stop-color="#f4d683"/></linearGradient></defs><path d="M0 1H7V4H14V13H0Z" fill="#d6b463"/><path d="M7 0H14V4H7Z" fill="#dcbd70"/><path d="M0 12H14V13H0Z" fill="#c9a14c"/><path d="M8 1H11V3H8Z" fill="#ffffff"/><path d="M11 1H13V3H11Z" fill="#5598e4"/><path d="M1 2H6V4H1Z" fill="#fbe9b4"/><path d="M1 4H13V12H1Z" fill="url(#fg2)"/><path d="M1 4H2V12H1Z" fill="#fdf0c8"/></svg></div><div class="a lt" style="left:304px;top:352px;letter-spacing:-1.150px">SMS</div><div class="a" style="left:287px;top:372px"><svg width="14" height="13" viewBox="0 0 14 13" shape-rendering="crispEdges"><defs><linearGradient id="fg2" x1="0" y1="0" x2="0" y2="1"><stop offset="0" stop-color="#fce9b0"/><stop offset="1" stop-color="#f4d683"/></linearGradient></defs><path d="M0 1H7V4H14V13H0Z" fill="#d6b463"/><path d="M7 0H14V4H7Z" fill="#dcbd70"/><path d="M0 12H14V13H0Z" fill="#c9a14c"/><path d="M8 1H11V3H8Z" fill="#ffffff"/><path d="M11 1H13V3H11Z" fill="#5598e4"/><path d="M1 2H6V4H1Z" fill="#fbe9b4"/><path d="M1 4H13V12H1Z" fill="url(#fg2)"/><path d="M1 4H2V12H1Z" fill="#fdf0c8"/></svg></div><div class="a lt" style="left:304px;top:371px;letter-spacing:-1.150px">SPC</div><div class="a" style="left:287px;top:391px"><svg width="14" height="13" viewBox="0 0 14 13" shape-rendering="crispEdges"><defs><linearGradient id="fg2" x1="0" y1="0" x2="0" y2="1"><stop offset="0" stop-color="#fce9b0"/><stop offset="1" stop-color="#f4d683"/></linearGradient></defs><path d="M0 1H7V4H14V13H0Z" fill="#d6b463"/><path d="M7 0H14V4H7Z" fill="#dcbd70"/><path d="M0 12H14V13H0Z" fill="#c9a14c"/><path d="M8 1H11V3H8Z" fill="#ffffff"/><path d="M11 1H13V3H11Z" fill="#5598e4"/><path d="M1 2H6V4H1Z" fill="#fbe9b4"/><path d="M1 4H13V12H1Z" fill="url(#fg2)"/><path d="M1 4H2V12H1Z" fill="#fdf0c8"/></svg></div><div class="a lt" style="left:304px;top:390px;letter-spacing:-0.186px">Trusted Devices</div><div class="a" style="left:287px;top:410px"><svg width="14" height="13" viewBox="0 0 14 13" shape-rendering="crispEdges"><defs><linearGradient id="fg2" x1="0" y1="0" x2="0" y2="1"><stop offset="0" stop-color="#fce9b0"/><stop offset="1" stop-color="#f4d683"/></linearGradient></defs><path d="M0 1H7V4H14V13H0Z" fill="#d6b463"/><path d="M7 0H14V4H7Z" fill="#dcbd70"/><path d="M0 12H14V13H0Z" fill="#c9a14c"/><path d="M8 1H11V3H8Z" fill="#ffffff"/><path d="M11 1H13V3H11Z" fill="#5598e4"/><path d="M1 2H6V4H1Z" fill="#fbe9b4"/><path d="M1 4H13V12H1Z" fill="url(#fg2)"/><path d="M1 4H2V12H1Z" fill="#fdf0c8"/></svg></div><div class="a lt" style="left:304px;top:409px;letter-spacing:0.150px">Web Hosting</div>
<!-- status bar -->
<div class="a" style="left:8px;top:438px;width:728px;height:1px;background:#a3a6ac"></div>
<div class="a" style="left:8px;top:439px;width:728px;height:22px;background:#fff;border-left:1px solid #a0a0a0;border-right:1px solid #a0a0a0;border-bottom:1px solid #a0a0a0"></div>
<div class="a" style="left:515px;top:440px;width:1px;height:20px;background:#d5d5d5"></div>
<div class="a" style="left:648px;top:440px;width:1px;height:20px;background:#d5d5d5"></div>
<div class="a" style="left:733px;top:440px;width:1px;height:20px;background:#d5d5d5"></div>
</body></html>
